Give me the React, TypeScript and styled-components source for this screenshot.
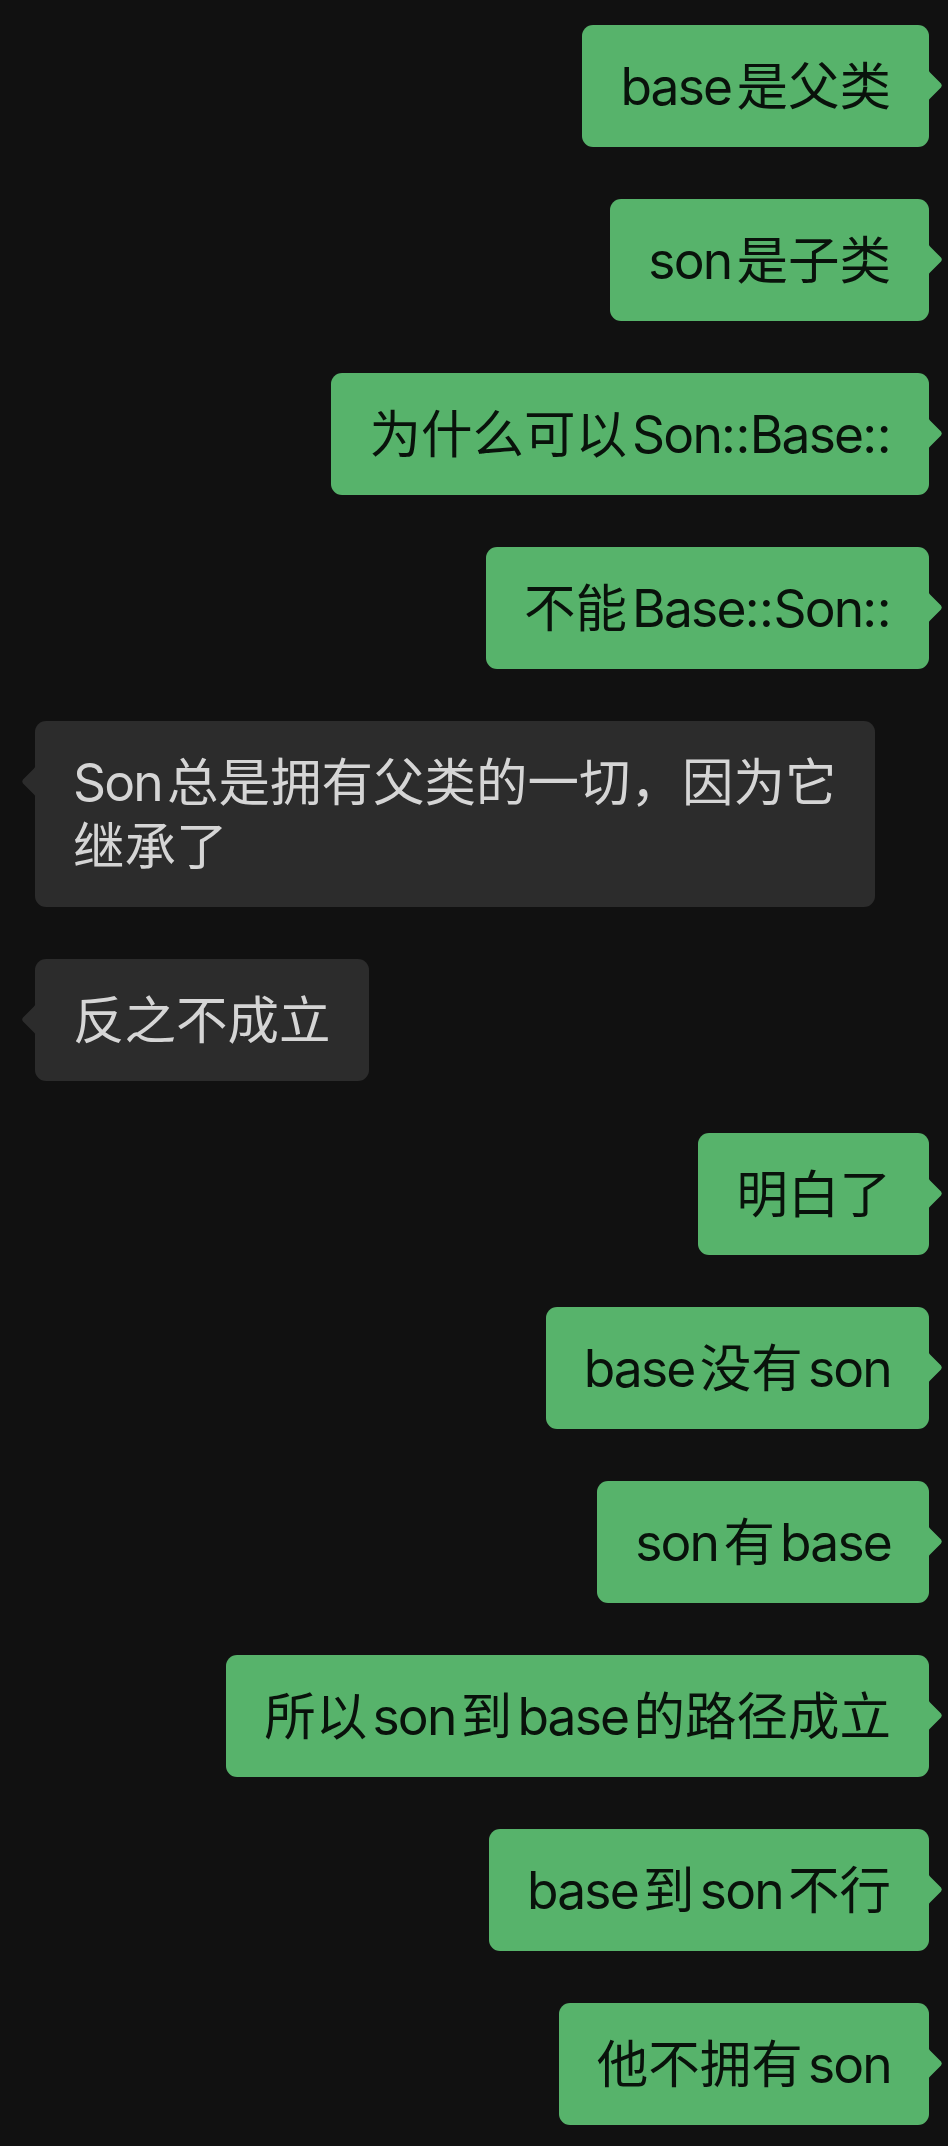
import styled, { createGlobalStyle } from 'styled-components';

type Message = {
  id: number;
  mine: boolean;
  text: string;
};

const messages: Message[] = [
  { id: 1, mine: true, text: 'base是父类' },
  { id: 2, mine: true, text: 'son是子类' },
  { id: 3, mine: true, text: '为什么可以Son::Base::' },
  { id: 4, mine: true, text: '不能Base::Son::' },
  { id: 5, mine: false, text: 'Son总是拥有父类的一切，因为它\n继承了' },
  { id: 6, mine: false, text: '反之不成立' },
  { id: 7, mine: true, text: '明白了' },
  { id: 8, mine: true, text: 'base没有son' },
  { id: 9, mine: true, text: 'son有base' },
  { id: 10, mine: true, text: '所以son到base的路径成立' },
  { id: 11, mine: true, text: 'base到son不行' },
  { id: 12, mine: true, text: '他不拥有son' },
];

const renderLatin = (word: string) =>
  word
    .split(/(:+)/)
    .filter((p) => p !== '')
    .map((p, i) => (p.startsWith(':') ? <Colon key={i}>{p}</Colon> : p));

// latin words get a little air next to the chinese text, like iOS does
const renderText = (text: string) => {
  const parts = text.split(/([A-Za-z:]+)/).filter((p) => p !== '');
  return parts.map((part, i) =>
    /^[A-Za-z:]+$/.test(part) ? (
      <Latin key={i} $before={i > 0} $after={i < parts.length - 1}>
        {renderLatin(part)}
      </Latin>
    ) : (
      <span key={i}>{part}</span>
    )
  );
};

const Bubble = ({ mine, text }: Message) => (
  <Row $mine={mine}>
    <Body $mine={mine}>
      {renderText(text)}
      <Tail $mine={mine} width="15" height="33" viewBox="0 0 15 33">
        <path d="M0 0 Q0.6 2 2 3.4 L13 14.6 Q14.6 16.5 13 18.4 L2 29.6 Q0.6 31 0 33 Z" />
      </Tail>
    </Body>
  </Row>
);

const App = () => (
  <>
    <GlobalStyle />
    <Chat>
      {messages.map((m) => (
        <Bubble key={m.id} {...m} />
      ))}
    </Chat>
  </>
);

const GlobalStyle = createGlobalStyle`
  html, body {
    margin: 0;
    padding: 0;
    background: #111111;
  }
  body {
    font-family: Inter, "Noto Sans CJK SC", "Noto Sans", sans-serif;
  }
`;

const Chat = styled.div`
  display: flex;
  flex-direction: column;
  gap: 52px;
  padding: 25px 19px 22px 35px;
  background: #111111;
`;

const Row = styled.div<{ $mine: boolean }>`
  display: flex;
  justify-content: ${(p) => (p.$mine ? 'flex-end' : 'flex-start')};
`;

const Body = styled.div<{ $mine: boolean }>`
  position: relative;
  max-width: 880px;
  padding: 29px 38px;
  border-radius: 11px;
  background: ${(p) => (p.$mine ? '#57b36b' : '#2c2c2c')};
  color: ${(p) => (p.$mine ? '#09120b' : '#d5d5d5')};
  font-size: 51.5px;
  line-height: 64px;
  white-space: pre-line;
`;

const Latin = styled.span<{ $before: boolean; $after: boolean }>`
  letter-spacing: -0.035em;
  margin-left: ${(p) => (p.$before ? '0.1em' : '0')};
  margin-right: ${(p) => (p.$after ? '0.1em' : '0')};
`;

const Colon = styled.span`
  letter-spacing: -0.01em;
`;

const Tail = styled.svg<{ $mine: boolean }>`
  position: absolute;
  top: 44px;
  ${(p) => (p.$mine ? 'right: -14px;' : 'left: -14px; transform: scaleX(-1);')}
  fill: ${(p) => (p.$mine ? '#57b36b' : '#2c2c2c')};
`;

export default App;
